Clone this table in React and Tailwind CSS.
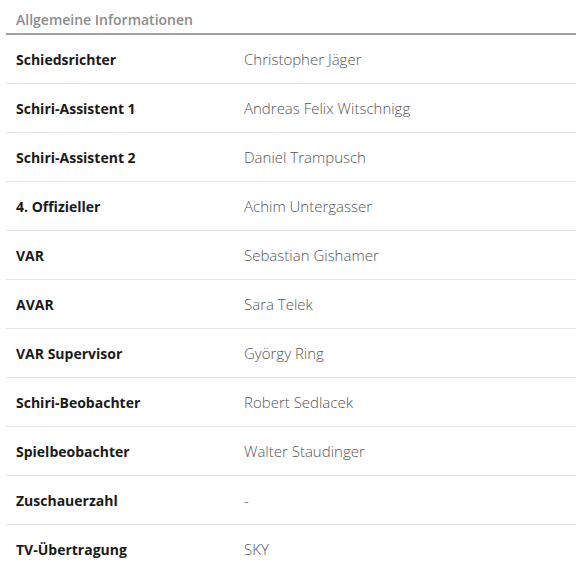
import React from "react";

const rows = [
  ["Schiedsrichter", "Christopher Jäger"],
  ["Schiri-Assistent 1", "Andreas Felix Witschnigg"],
  ["Schiri-Assistent 2", "Daniel Trampusch"],
  ["4. Offizieller", "Achim Untergasser"],
  ["VAR", "Sebastian Gishamer"],
  ["AVAR", "Sara Telek"],
  ["VAR Supervisor", "György Ring"],
  ["Schiri-Beobachter", "Robert Sedlacek"],
  ["Spielbeobachter", "Walter Staudinger"],
  ["Zuschauerzahl", "-"],
  ["TV-Übertragung", "SKY"],
];

export default function App() {
  return (
    <div className="bg-white w-[586px] h-[579px] pl-[6px] font-['Open_Sans',sans-serif]">
      <div className="w-[570px]">
        <div className="h-[35px] border-b-2 border-[#a0a0a0] pl-[10px] pt-[10px] text-[14px] leading-[20px] font-semibold text-[#8c8c8c]">
          Allgemeine Informationen
        </div>
        {rows.map(([k, v], i) => (
          <div
            key={k}
            className={
              "flex items-center h-[49px] pl-[10px] " +
              (i < rows.length - 1 ? "border-b border-[#e6e6e6]" : "")
            }
          >
            <div className="w-[228px] text-[14px] font-bold text-[#1a1a1a]">{k}</div>
            <div className="text-[15px] font-light text-[#555555]">{v}</div>
          </div>
        ))}
      </div>
    </div>
  );
}
